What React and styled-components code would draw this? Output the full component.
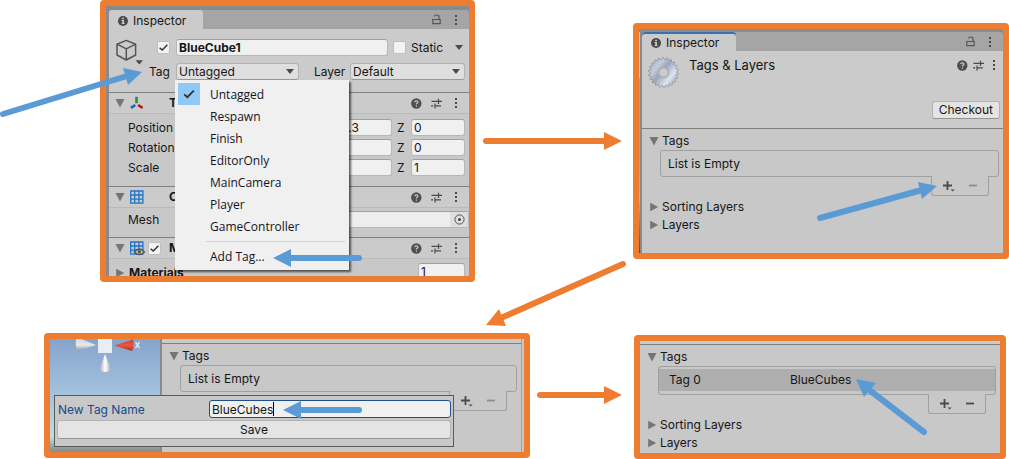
import React from "react";
import styled, { createGlobalStyle, css } from "styled-components";

const ORANGE = "#ed7d31";
const BLUE = "#5b9bd5";

const GlobalStyle = createGlobalStyle`
  * { box-sizing: border-box; }
  body {
    margin: 0;
    background: #fff;
    color: #161616;
    font: 12px/16px Inter, "Liberation Sans", sans-serif;
  }
  input, select, button {
    font: inherit;
    color: inherit;
    margin: 0;
  }
  ul { margin: 0; padding: 0; list-style: none; }
`;

/* ---------- page ---------- */

const Board = styled.main`
  position: relative;
  display: grid;
  row-gap: 51px;
`;

const Steps = styled.div`
  display: grid;
  align-items: start;
  grid-template-columns: ${(p) =>
    p.$columns.map((c) => `minmax(0, ${c}fr)`).join(" ")};
`;

const Panel = styled.section`
  position: relative;
  grid-column: ${(p) => p.$column};
  margin-top: ${(p) => p.$drop || 0}px;
  border: 6px solid ${ORANGE};
  border-radius: 4px;
  background: #c8c8c8;
`;

const ArrowLayer = styled.svg`
  position: absolute;
  inset: 0;
  width: 100%;
  height: 100%;
  z-index: 5;
  pointer-events: none;
`;

/* ---------- inspector window ---------- */

const Window = styled.div`
  padding: ${(p) => p.$top}px 0 0 3px;
  background: ${(p) =>
    p.$scene
      ? "linear-gradient(#8a8a8a 3px, #c9c9c9 3px 49px, #8ba6cc 49px 130px, #a9b6c4 170px, #4c4c4c) left / 1px 100% no-repeat, #8a8a8a"
      : "#8a8a8a"};
`;

const TabBar = styled.div`
  display: flex;
  align-items: center;
  height: 19px;
  padding-right: 7px;
  background: #a5a5a5;
  border-radius: 3px 3px 0 0;
`;

const Tab = styled.div`
  display: flex;
  align-items: center;
  gap: 5px;
  height: 19px;
  width: 94px;
  padding: 2px 0 0 9px;
  margin-right: auto;
  background: #cbcbcb;
  border-radius: 3px 3px 0 0;
  ${(p) => p.$active && css`box-shadow: inset 0 2px #3a72b0;`}
`;

const IconButton = styled.button`
  display: grid;
  place-items: center;
  width: ${(p) => p.$width || 12}px;
  height: 16px;
  padding: 0;
  border: 0;
  background: none;
  color: #555;
`;

const Icons = styled.div`
  display: flex;
  gap: ${(p) => (p.$tight ? 4 : 8)}px;
  margin-left: auto;
`;

const ObjectHeader = styled.div`
  display: flex;
  height: 63px;
  padding: 10px 4px 0 7px;
  background: #cbcbcb;
`;

const ObjectIcon = styled.div`
  width: 31px;
  flex: none;
`;

const ObjectRows = styled.div`
  flex: 1;
  min-width: 0;
  display: flex;
  flex-direction: column;
  gap: 7px;
`;

const NameRow = styled.div`
  display: flex;
  align-items: center;
  gap: 5px;
  height: 17px;
  padding: 0 2px 0 10px;
`;

const StaticLabel = styled.label`
  width: 39px;
`;

const TagRow = styled.div`
  display: flex;
  height: 17px;
`;

const DropLabel = styled.label`
  width: ${(p) => p.$width}px;
  padding-left: ${(p) => p.$indent}px;
  flex: none;
  line-height: 18px;
`;

const Drop = styled.div`
  position: relative;
  flex: ${(p) => p.$grow} 1 0;
  min-width: 0;
`;

const Select = styled.select`
  appearance: none;
  display: block;
  width: 100%;
  height: 17px;
  padding: 0 18px 0 2px;
  line-height: 15px;
  border: 1px solid #b2b2b2;
  border-bottom-color: #989898;
  border-radius: 3px;
  background: #dfdfdf;
`;

const DropCaret = styled.svg`
  position: absolute;
  right: 5px;
  top: 6px;
  pointer-events: none;
`;

const Menu = styled.ul`
  position: absolute;
  z-index: 2;
  top: 100%;
  left: -1px;
  width: 174px;
  padding: 3px;
  background: #f0f0f0;
  box-shadow: 2px 2px 2px rgba(0, 0, 0, 0.6);
  font: 12px/24px "Open Sans", "Noto Sans", sans-serif;
`;

const MenuItem = styled.button`
  display: grid;
  grid-template-columns: 22px 1fr;
  grid-template-rows: 22px;
  column-gap: 10px;
  width: 100%;
  height: 22px;
  padding: 0;
  border: 0;
  background: none;
  text-align: left;
  color: #14141e;
`;

const MenuTick = styled.span`
  display: grid;
  place-items: center;
  background: ${(p) => (p.$on ? "#90c8f6" : "none")};
`;

const MenuRule = styled.li`
  height: 1px;
  margin: 4px 1px 3px 28px;
  background: #d2d2d2;
`;

const CheckWrap = styled.span`
  display: grid;
  place-items: center;
  flex: none;
  width: 13px;
  height: 13px;
  margin-right: ${(p) => p.$space || 0}px;
  > * { grid-area: 1 / 1; }
  > svg { pointer-events: none; }
`;

const CheckInput = styled.input`
  appearance: none;
  width: 13px;
  height: 13px;
  margin: 0;
  border: 1px solid #c0c0c0;
  border-radius: 2px;
  background: #f3f3f3;
`;

const Field = styled.input`
  flex: 1;
  width: 100%;
  min-width: 0;
  height: 17px;
  padding: 0 2px;
  line-height: 15px;
  border: 1px solid #b7b7b7;
  border-top-color: #a0a0a0;
  border-radius: 3px;
  background: #f0f0f0;
  font-weight: ${(p) => (p.$bold ? 700 : 400)};
`;

/* ---------- components of the object ---------- */

const Component = styled.div`
  border-top: 1px solid #7f7f7f;
  background: #c8c8c8;
`;

const ComponentHead = styled.div`
  display: flex;
  align-items: center;
  height: 21px;
  padding: 0 7px 0 6px;
  background: #cbcbcb;
  border-bottom: 1px solid #bababa;
`;

const HeadIcon = styled.span`
  display: grid;
  width: 14px;
  margin: 0 4px 0 5px;
`;

const HeadSlot = styled.span`
  width: 21px;
`;

const HeadTitle = styled.strong`
  font-weight: 700;
`;

const VectorRows = styled.div`
  display: grid;
  gap: 3px;
  padding: 5px 4px 10px 19px;
`;

const VectorRow = styled.div`
  display: flex;
  height: 17px;
`;

const RowLabel = styled.label`
  width: 123px;
  flex: none;
  line-height: 18px;
`;

const Axes = styled.div`
  flex: 1;
  display: grid;
  grid-template-columns: repeat(3, minmax(0, 1fr));
  column-gap: 5px;
`;

const Axis = styled.label`
  display: grid;
  grid-template-columns: 14px minmax(0, 1fr);
  line-height: 18px;
`;

const MeshRow = styled.div`
  display: flex;
  height: 29px;
  padding: 3px 4px 0 19px;
`;

const ObjectField = styled.div`
  position: relative;
  flex: 1;
  display: flex;
  height: 17px;
  border: 1px solid #b7b7b7;
  border-top-color: #a0a0a0;
  border-radius: 3px;
  background: #ededed;
`;

const ObjectInput = styled.input`
  flex: 1;
  min-width: 0;
  padding: 0 3px;
  border: 0;
  background: none;
`;

const Picker = styled(IconButton)`
  width: 18px;
  height: 15px;
  background: #dedede;
`;

const MaterialsRow = styled.div`
  display: flex;
  height: 17px;
  padding: 4px 4px 0 6px;
  overflow: hidden;
`;

const MaterialsLabel = styled.label`
  flex: 1;
  display: flex;
  align-items: flex-start;
  gap: 4px;
  font-weight: 700;
  line-height: 20px;
  svg { margin-top: 5px; }
`;

const CountField = styled(Field)`
  flex: 0 0 47px;
`;

/* ---------- tag manager ---------- */

const ManagerHeader = styled.header`
  display: flex;
  gap: 10px;
  height: 77px;
  padding: 6px 3px 0 6px;
  background: #cbcbcb;
`;

const ManagerTitle = styled.h2`
  margin: 0;
  font: inherit;
  font-size: 13px;
`;

const ManagerTools = styled.div`
  display: flex;
  flex-direction: column;
  align-items: flex-end;
  gap: 28px;
  margin-left: auto;
`;

const Button = styled.button`
  height: ${(p) => p.$height || 18}px;
  padding: 0 6px;
  line-height: 14px;
  border: 1px solid #b2b2b2;
  border-bottom-color: #949494;
  border-radius: 3px;
  background: #e4e4e4;
`;

const TagSection = styled.div`
  border-top: 1px solid #7f7f7f;
  padding: 3px ${(p) => p.$right}px ${(p) => p.$bottom}px ${(p) => p.$left}px;
  background: #c8c8c8;
`;

const Foldout = styled.button`
  display: flex;
  align-items: center;
  gap: 3px;
  height: 18px;
  padding: 0;
  border: 0;
  background: none;
`;

const ListBox = styled.div`
  margin-left: 11px;
  border: 1px solid #a0a0a0;
  border-radius: 3px;
`;

const EmptyText = styled.div`
  padding: 0 7px;
  line-height: 25px;
`;

const TagItem = styled.div`
  display: grid;
  grid-template-columns: 121px 1fr;
  margin: 2px 0 3px;
  padding-left: 10px;
  line-height: 22px;
  background: #aeaeae;
`;

const ListFooter = styled.div`
  display: flex;
  justify-content: space-between;
  align-items: center;
  width: 58px;
  height: 20px;
  margin: -1px 10px 2px auto;
  padding: 0 9px;
  border: 1px solid #a0a0a0;
  border-top: 0;
  border-radius: 0 0 3px 3px;
  background: #c8c8c8;
`;

const Strip = styled.div`
  height: 4px;
  background: #cbcbcb;
  ${(p) => p.$thin && css`height: 3px;`}
`;

/* ---------- new tag step ---------- */

const Split = styled.div`
  display: grid;
  grid-template-columns: 110px minmax(0, 1fr);
`;

const Scene = styled.div`
  overflow: hidden;
  background: linear-gradient(#86a3cb, #9cbada 40px, #b0cde0 75px, #c2dbdc 98px, #8d9898 110px, #878d8b);
`;

const SceneMode = styled.div`
  padding-left: 30px;
  margin-top: 5px;
  line-height: 16px;
  color: #c7d3df;
  white-space: nowrap;
`;

const ManagerPane = styled.div`
  border-left: 2px solid #8a8a8a;
  padding-right: 1px;
  border-right: 2px solid #c8c8c8;
  background: #a0a0a0;
`;

const Popup = styled.form`
  position: absolute;
  z-index: 2;
  left: 4px;
  right: 70px;
  top: 56px;
  display: grid;
  gap: 2px;
  padding: 4px 2px 7px;
  border: 1px solid #5a5a5a;
  background: #c8c8c8;
`;

const PopupRow = styled.div`
  display: flex;
  height: 18px;
`;

const PopupLabel = styled.label`
  width: 152px;
  padding-left: 1px;
  line-height: 20px;
  color: #15498c;
`;

const TagInput = styled(Field)`
  height: 18px;
  padding: 1px 2px 0;
  border-color: #1d5087;
`;

const Typed = styled.div`
  position: relative;
  flex: 1;
  display: flex;
`;

const Caret = styled.span`
  position: absolute;
  left: 64px;
  top: 2px;
  width: 1px;
  height: 14px;
  background: #000;
`;

/* ---------- icons ---------- */

const Triangle = ({ open }) => (
  <svg width="10" height="10" viewBox="0 0 10 10" fill="#757575">
    <path d={open ? "M0.5 1H9.5L5 9.5z" : "M1.2 0.8L9.2 5L1.2 9.2z"} />
  </svg>
);

const InfoIcon = () => (
  <svg width="10" height="10" viewBox="0 0 10 10">
    <circle cx="5" cy="5" r="5" fill="#4a4a4a" />
    <path d="M4.2 1.8h1.7v1.4H4.2zM3.6 4.1h2.3v3.1h0.8v0.9H3.5V7.2h0.8V5H3.6z" fill="#d2d2d2" />
  </svg>
);

const LockIcon = () => (
  <svg width="9" height="11" viewBox="0 0 9 11" fill="none" stroke="#555" strokeWidth="1.2">
    <path d="M0.8 5.5h7.4v4.2h-7.4zM7 5.5V2.5Q7 1 4.5 1Q2.5 1 2.3 2.3" />
  </svg>
);

const KebabIcon = () => (
  <svg width="4" height="12" viewBox="0 0 4 12" fill="#4a4a4a">
    <path d="M1 1h2v2H1zM1 5h2v2H1zM1 9h2v2H1z" />
  </svg>
);

const HelpIcon = () => (
  <svg width="11" height="11" viewBox="0 0 11 11">
    <circle cx="5.3" cy="5.5" r="5.2" fill="#4f4f4f" />
    <path d="M3.6 4.1Q3.8 2.8 5.3 2.8Q7 2.8 7 4.1Q7 5 5.4 5.8V6.6M5.4 7.5v1.3" fill="none" stroke="#cbcbcb" strokeWidth="1.2" />
  </svg>
);

const PresetIcon = () => (
  <svg width="11" height="11" viewBox="0 0 11 11" fill="none" stroke="#4a4a4a" strokeWidth="1.2">
    <path d="M0.5 3.4H7M7.5 0.8v5.2M7.5 3.4H11M0 7.8h2.2M4 5.4v5M4 7.8h6" />
  </svg>
);

const CaretDown = () => (
  <svg width="8" height="5" viewBox="0 0 8 5" fill="#4c4c46">
    <path d="M0 0h8L4 5z" />
  </svg>
);

const Tick = ({ size = 13 }) => (
  <svg width={size} height={size} viewBox="0 0 12 12" fill="none" stroke="#303030" strokeWidth="1.3">
    <path d="M2.4 6.2L4.8 8.4L9.6 3.4" />
  </svg>
);

const CubeIcon = () => (
  <svg width="28" height="26" viewBox="0 0 28 26">
    <g fill="none" stroke="#555" strokeWidth="1.5" strokeLinejoin="round">
      <path d="M10.3 1.4L19.6 5.2V16L10.3 21L1 16V5.2z" />
      <path d="M1 5.2L10.3 9.8L19.6 5.2M10.3 9.8V21" />
    </g>
    <path d="M19.5 21.3h7.5l-3.7 4.2z" fill="#4c4c46" />
  </svg>
);

const TransformIcon = () => (
  <svg width="14" height="14" viewBox="0 0 14 14" fill="none" strokeWidth="2.6">
    <path d="M6.5 0.8v6.4" stroke="#2f8b34" />
    <path d="M5.3 9L1 11.8" stroke="#1466c4" />
    <path d="M8 9L12.6 11.8" stroke="#c11414" />
  </svg>
);

const GridIcon = ({ eye }) => (
  <svg width="16" height="15" viewBox="0 0 16 15">
    <path
      d="M0.7 1h12.2v12.2H0.7zM4.7 1v12.2M8.9 1v12.2M0.7 5h12.2M0.7 9.1h12.2"
      fill="none"
      stroke="#1f74c8"
      strokeWidth="1.3"
    />
    {eye && (
      <g>
        <path d="M4.4 11Q9.4 5 14.4 11Q9.4 16.4 4.4 11z" fill="#cbcbcb" stroke="#555" strokeWidth="1.3" />
        <circle cx="9.4" cy="10.8" r="1.7" fill="#555" />
      </g>
    )}
  </svg>
);

const TargetIcon = () => (
  <svg width="11" height="11" viewBox="0 0 11 11">
    <circle cx="5.5" cy="5.5" r="4.6" fill="none" stroke="#555" />
    <circle cx="5.5" cy="5.5" r="1.5" fill="#444" />
  </svg>
);

const PlusIcon = () => (
  <svg width="15" height="14" viewBox="0 0 15 14">
    <path d="M2 6.5h9M6.5 2v9" stroke="#4a4a4a" strokeWidth="1.8" />
    <path d="M9.6 10.4h4l-2 2.2z" fill="#4a4a4a" />
  </svg>
);

const MinusIcon = ({ dim }) => (
  <svg width="8" height="3" viewBox="0 0 8 3">
    <path d="M0 1.5h8" stroke={dim ? "#8c8c8c" : "#4a4a4a"} strokeWidth="1.8" />
  </svg>
);

const gearPoints = Array.from({ length: 88 }, (_, i) => {
  const phase = i % 4;
  const r = phase === 1 || phase === 2 ? 15 : 13;
  const a = (i / 88) * Math.PI * 2;
  return `${(15.5 + r * Math.cos(a)).toFixed(2)},${(15.5 + r * Math.sin(a)).toFixed(2)}`;
}).join(" ");

const GearIcon = () => (
  <svg width="31" height="31" viewBox="0 0 31 31">
    <defs>
      <linearGradient id="steel" x1="0" y1="0.1" x2="1" y2="0.9">
        <stop offset="0" stopColor="#a3afc2" />
        <stop offset="0.28" stopColor="#c3ccd9" />
        <stop offset="0.45" stopColor="#98a6bb" />
        <stop offset="0.72" stopColor="#dde4ee" />
        <stop offset="1" stopColor="#8f9bae" />
      </linearGradient>
    </defs>
    <polygon points={gearPoints} fill="url(#steel)" stroke="#838c9a" strokeWidth="0.7" />
    <circle cx="15.5" cy="15.5" r="5" fill="#cbcbcb" stroke="#a8abb0" strokeWidth="1.4" />
  </svg>
);

const Gizmo = () => (
  <svg width="110" height="44" viewBox="0 0 110 44">
    <defs>
      <linearGradient id="cone" x1="0" y1="0" x2="0" y2="1">
        <stop offset="0" stopColor="#d6d9dd" />
        <stop offset="0.5" stopColor="#e6e8ea" />
        <stop offset="1" stopColor="#8f969f" />
      </linearGradient>
      <linearGradient id="coneDown">
        <stop offset="0" stopColor="#a4abb4" />
        <stop offset="0.5" stopColor="#fff" />
        <stop offset="1" stopColor="#a4abb4" />
      </linearGradient>
      <linearGradient id="coneRed" x1="0" y1="0" x2="0" y2="1">
        <stop offset="0" stopColor="#b9483c" />
        <stop offset="0.5" stopColor="#f4523c" />
        <stop offset="1" stopColor="#a93324" />
      </linearGradient>
    </defs>
    <path d="M26 0Q25 6 27 12L46 6L31 0z" fill="url(#cone)" />
    <path d="M64 6.5L83 0.5Q85 7 82 12z" fill="url(#coneRed)" />
    <path d="M55 15L49.5 31Q55 35 61 31z" fill="url(#coneDown)" />
    <path d="M48 0h14v14H48z" fill="#e9eef4" />
    <path d="M85.5 3L89.5 9M89.5 3L85.5 9" stroke="#f2f2f2" strokeWidth="1.3" />
  </svg>
);

/* ---------- arrows ---------- */

const arrows = [
  { color: BLUE, from: [3, 114], to: [127, 76], head: "142,72 123,68 128,85" },
  { color: BLUE, from: [359, 258], to: [288, 258], head: "273,258 291,249 291,267" },
  { color: BLUE, from: [820, 218], to: [922, 190], head: "937,186 918,182 922,199" },
  { color: BLUE, from: [359, 410], to: [298, 410], head: "283,410 301,401 301,419" },
  { color: BLUE, from: [924, 432], to: [868, 389], head: "856,379 876,383 864,397" },
  { color: ORANGE, from: [486, 141], to: [606, 141], head: "622,141 604,132 604,150" },
  { color: ORANGE, from: [623, 264], to: [501, 318], head: "486,325 499,309 506,326" },
  { color: ORANGE, from: [540, 395], to: [606, 395], head: "622,395 604,386 604,404" },
];

const Arrows = () => (
  <ArrowLayer viewBox="0 0 1009 459" preserveAspectRatio="none" aria-hidden="true">
    {arrows.map((a) => (
      <g key={a.head} fill={a.color} stroke={a.color}>
        <line x1={a.from[0]} y1={a.from[1]} x2={a.to[0]} y2={a.to[1]} strokeWidth="6" strokeLinecap="round" />
        <polygon points={a.head} stroke="none" />
      </g>
    ))}
  </ArrowLayer>
);

/* ---------- parts ---------- */

const InspectorTabs = ({ active }) => (
  <TabBar>
    <Tab $active={active}>
      <InfoIcon />
      Inspector
    </Tab>
    <Icons>
      <IconButton aria-label="Lock"><LockIcon /></IconButton>
      <IconButton aria-label="Window menu"><KebabIcon /></IconButton>
    </Icons>
  </TabBar>
);

const ComponentTools = ({ tight }) => (
  <Icons $tight={tight}>
    <IconButton aria-label="Help"><HelpIcon /></IconButton>
    <IconButton aria-label="Presets"><PresetIcon /></IconButton>
    <IconButton aria-label="More"><KebabIcon /></IconButton>
  </Icons>
);

const Checkbox = ({ id, label, checked, space }) => (
  <CheckWrap $space={space}>
    <CheckInput id={id} type="checkbox" aria-label={label} defaultChecked={checked} />
    {checked && <Tick />}
  </CheckWrap>
);

const Dropdown = ({ id, grow, options, children }) => (
  <Drop $grow={grow}>
    <Select id={id}>
      {options.map((o) => <option key={o}>{o}</option>)}
    </Select>
    <DropCaret width="8" height="5" viewBox="0 0 8 5" fill="#4c4c46">
      <path d="M0 0h8L4 5z" />
    </DropCaret>
    {children}
  </Drop>
);

const TAGS = ["Untagged", "Respawn", "Finish", "EditorOnly", "MainCamera", "Player", "GameController"];

const TagMenu = () => (
  <Menu>
    {TAGS.map((tag, i) => (
      <li key={tag}>
        <MenuItem type="button">
          <MenuTick $on={i === 0}>{i === 0 && <Tick size={16} />}</MenuTick>
          {tag}
        </MenuItem>
      </li>
    ))}
    <MenuRule role="separator" />
    <li>
      <MenuItem type="button">
        <MenuTick />
        Add Tag...
      </MenuItem>
    </li>
  </Menu>
);

const ComponentBar = ({ icon, title, enabled }) => (
  <ComponentHead>
    <Triangle open />
    <HeadIcon>{icon}</HeadIcon>
    <HeadSlot>{enabled && <Checkbox label={`${title} enabled`} checked />}</HeadSlot>
    <HeadTitle>{title}</HeadTitle>
    <ComponentTools />
  </ComponentHead>
);

const VECTORS = [
  ["Position", ["0", "0.3", "0"]],
  ["Rotation", ["0", "0", "0"]],
  ["Scale", ["1", "1", "1"]],
];

const TagList = ({ tags = [], left, right, bottom, collapsed = true }) => (
  <TagSection $left={left} $right={right} $bottom={bottom}>
    <Foldout><Triangle open />Tags</Foldout>
    <ListBox>
      {tags.length === 0 && <EmptyText>List is Empty</EmptyText>}
      {tags.map((tag, i) => (
        <TagItem key={tag}>
          <span>Tag {i}</span>
          <span>{tag}</span>
        </TagItem>
      ))}
    </ListBox>
    <ListFooter>
      <IconButton $width={15} aria-label="Add tag"><PlusIcon /></IconButton>
      <IconButton aria-label="Remove tag"><MinusIcon dim={tags.length === 0} /></IconButton>
    </ListFooter>
    {collapsed && (
      <>
        <Foldout><Triangle />Sorting Layers</Foldout>
        <Foldout><Triangle />Layers</Foldout>
      </>
    )}
  </TagSection>
);

export default function App() {
  return (
    <>
      <GlobalStyle />
      <Board>
        <Steps $columns={[100, 375, 158, 376]}>
          <Panel $column={2}>
            <Window $top={4}>
              <InspectorTabs />
              <ObjectHeader>
                <ObjectIcon><CubeIcon /></ObjectIcon>
                <ObjectRows>
                  <NameRow>
                    <Checkbox label="Active" checked space={1} />
                    <Field $bold aria-label="Object name" defaultValue="BlueCube1" />
                    <Checkbox id="static" />
                    <StaticLabel htmlFor="static">Static</StaticLabel>
                    <IconButton $width={8} aria-label="Static options"><CaretDown /></IconButton>
                  </NameRow>
                  <TagRow>
                    <DropLabel htmlFor="tag" $width={29} $indent={2}>Tag</DropLabel>
                    <Dropdown id="tag" grow={123} options={["Untagged"]}>
                      <TagMenu />
                    </Dropdown>
                    <DropLabel htmlFor="layer" $width={51} $indent={15}>Layer</DropLabel>
                    <Dropdown id="layer" grow={115} options={["Default"]} />
                  </TagRow>
                </ObjectRows>
              </ObjectHeader>
              <Component>
                <ComponentBar icon={<TransformIcon />} title="Transform" />
                <VectorRows>
                  {VECTORS.map(([name, values]) => (
                    <VectorRow key={name}>
                      <RowLabel as="span">{name}</RowLabel>
                      <Axes>
                        {values.map((v, i) => (
                          <Axis key={i}>
                            {"XYZ"[i]}
                            <Field defaultValue={v} />
                          </Axis>
                        ))}
                      </Axes>
                    </VectorRow>
                  ))}
                </VectorRows>
              </Component>
              <Component>
                <ComponentBar icon={<GridIcon />} title="Cube (Mesh Filter)" />
                <MeshRow>
                  <RowLabel htmlFor="mesh">Mesh</RowLabel>
                  <ObjectField>
                    <ObjectInput id="mesh" defaultValue="Cube" />
                    <Picker aria-label="Pick mesh"><TargetIcon /></Picker>
                  </ObjectField>
                </MeshRow>
              </Component>
              <Component>
                <ComponentBar icon={<GridIcon eye />} title="Mesh Renderer" enabled />
                <MaterialsRow>
                  <MaterialsLabel htmlFor="materials"><Triangle />Materials</MaterialsLabel>
                  <CountField id="materials" defaultValue="1" />
                </MaterialsRow>
              </Component>
            </Window>
          </Panel>

          <Panel $column={4} $drop={23}>
            <Window $top={3} $scene>
              <InspectorTabs active />
              <ManagerHeader>
                <GearIcon />
                <ManagerTitle>Tags &amp; Layers</ManagerTitle>
                <ManagerTools>
                  <ComponentTools tight />
                  <Button type="button">Checkout</Button>
                </ManagerTools>
              </ManagerHeader>
              <TagList left={7} right={4} bottom={19} />
            </Window>
          </Panel>
        </Steps>

        <Steps $columns={[44, 486, 104, 372, 3]}>
          <Panel $column={2}>
            <Split>
              <Scene>
                <Gizmo />
                <SceneMode>&lt; Persp</SceneMode>
              </Scene>
              <ManagerPane>
                <Strip />
                <TagList left={7} right={4} bottom={39} collapsed={false} />
              </ManagerPane>
            </Split>
            <Popup onSubmit={(e) => e.preventDefault()}>
              <PopupRow>
                <PopupLabel htmlFor="new-tag">New Tag Name</PopupLabel>
                <Typed>
                  <TagInput id="new-tag" defaultValue="BlueCubes" />
                  <Caret />
                </Typed>
              </PopupRow>
              <Button $height={19}>Save</Button>
            </Popup>
          </Panel>

          <Panel $column={4} $drop={2}>
            <Strip $thin />
            <TagList tags={["BlueCubes"]} left={7} right={4} bottom={1} />
          </Panel>
        </Steps>
        <Arrows />
      </Board>
    </>
  );
}
